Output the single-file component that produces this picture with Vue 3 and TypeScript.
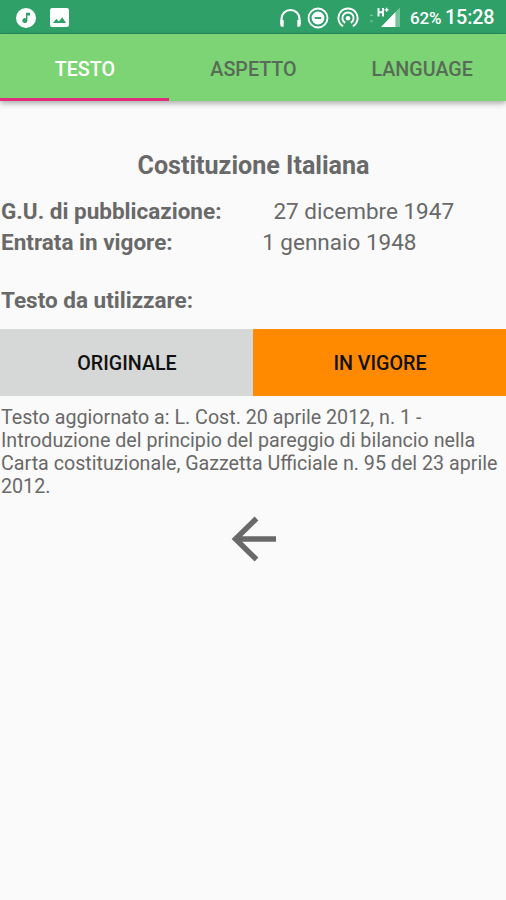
<script setup lang="ts">
import { ref } from 'vue'

interface Detail {
  label: string
  value: string
}

const tabs: string[] = ['TESTO', 'ASPETTO', 'LANGUAGE']
const activeTab = ref<number>(0)

const details: Detail[] = [
  { label: 'G.U. di pubblicazione:', value: '27 dicembre 1947' },
  { label: 'Entrata in vigore:', value: '1 gennaio 1948' },
]

const versions: string[] = ['ORIGINALE', 'IN VIGORE']
const version = ref<string>('IN VIGORE')
</script>

<template>
  <div class="screen">
    <header class="status">
      <svg class="music" viewBox="0 0 20 20">
        <circle cx="10" cy="10" r="10" fill="#fff" />
        <path d="M10 4.800h4v2.600h-2.600v5.100a2.500 2.500 0 1 1-1.400-2.200z" fill="#30a069" />
      </svg>
      <svg class="photo" viewBox="0 0 20 20">
        <rect width="20" height="20" rx="2.4" fill="#fff" />
        <path d="M3.200 15.800l3.600-4.600 2.500 3 3.500-4.400 4.200 6z" fill="#30a069" />
      </svg>
      <span class="spacer"></span>
      <svg class="headset" viewBox="0 0 22 19">
        <path d="M2.400 15.500V10.400a8.600 8.600 0 0 1 17.200 0v5.100" fill="none" stroke="#fff" stroke-width="2" />
        <path d="M1.300 11.500h3.200v6.300H2.600a1.300 1.300 0 0 1-1.300-1.300zM17.500 11.500h3.200v5a1.300 1.300 0 0 1-1.300 1.300h-1.900z" fill="#fff" />
      </svg>
      <svg class="dnd" viewBox="0 0 22 22">
        <circle cx="11" cy="11" r="9.500" fill="none" stroke="#fff" stroke-width="1.8" />
        <circle cx="11" cy="11" r="6.400" fill="#fff" />
        <path d="M7.700 11h6.600" stroke="#30a069" stroke-width="1.9" />
      </svg>
      <svg class="hotspot" viewBox="0 0 22 22">
        <g fill="none" stroke="#fff" stroke-width="1.9">
          <path d="M6.100 19.300a9.600 9.600 0 1 1 9.800 0" />
          <path d="M8.200 15.900a5.600 5.600 0 1 1 5.600 0" />
        </g>
        <circle cx="11" cy="11.300" r="2.300" fill="#fff" />
      </svg>
      <svg class="signal" viewBox="0 0 32 22">
        <path d="M0.500 9l2-2 2 2zM0.500 13.500l2 2 2-2z" fill="#76c39c" />
        <path d="M9.500 1v8.500M14 1v8.500M9.500 5.200H14" fill="none" stroke="#fff" stroke-width="1.9" />
        <path d="M15.600 2.800h4M17.600 0.800v4" stroke="#fff" stroke-width="1.300" />
        <path d="M26.500 5L31 0.500V20h-4.500z" fill="#76c39c" />
        <path d="M12 20L26.500 5V20z" fill="#fff" />
      </svg>
      <span class="battery">62%</span>
      <span class="clock">15:28</span>
    </header>

    <nav class="tabs">
      <button
        v-for="(tab, i) in tabs"
        :key="tab"
        class="tab"
        :class="{ active: i === activeTab }"
        @click="activeTab = i"
      >
        {{ tab }}
      </button>
    </nav>

    <main>
      <h1>Costituzione Italiana</h1>
      <dl>
        <div v-for="d in details" :key="d.label" class="detail">
          <dt>{{ d.label }}</dt>
          <dd>{{ d.value }}</dd>
        </div>
      </dl>
      <h2>Testo da utilizzare:</h2>
      <div class="versions">
        <button
          v-for="v in versions"
          :key="v"
          class="version"
          :class="{ selected: v === version }"
          @click="version = v"
        >
          {{ v }}
        </button>
      </div>
      <p>
        Testo aggiornato a: L. Cost. 20 aprile 2012, n. 1 -<br />
        Introduzione del principio del pareggio di bilancio nella<br />
        Carta costituzionale, Gazzetta Ufficiale n. 95 del 23 aprile<br />
        2012.
      </p>
      <button class="back" aria-label="Indietro">
        <svg viewBox="0 0 46 46">
          <path d="M45 23H5M25.500 2.500L4.500 23l21 20.500" fill="none" stroke="#696969" stroke-width="5.400" />
        </svg>
      </button>
    </main>
  </div>
</template>

<style>
body {
  margin: 0;
  background: #fafafa;
}
</style>

<style scoped>
.screen {
  width: 506px;
  height: 900px;
  overflow: hidden;
  background: #fafafa;
  color: #696969;
  font-family: Roboto, 'Liberation Sans', sans-serif;
}
button {
  margin: 0;
  padding: 0;
  border: 0;
  background: none;
  font: inherit;
}
svg {
  display: block;
  flex: none;
}
.status {
  display: flex;
  align-items: center;
  box-sizing: border-box;
  height: 34px;
  padding: 2px 12px 0 16px;
  background: #30a069;
  border-bottom: 1px solid #288f60;
  color: #fff;
  font-weight: 500;
}
.music { width: 20px; height: 20px; }
.photo { width: 19px; height: 19px; margin-left: 14px; }
.spacer { flex: 1; }
.headset { width: 23px; height: 20px; }
.dnd { width: 22px; height: 22px; margin-left: 5px; }
.hotspot { width: 22px; height: 22px; margin-left: 8px; }
.signal { width: 32px; height: 22px; margin-left: 10px; }
.battery { margin-left: 9px; font-size: 17px; width: 31px; white-space: nowrap; letter-spacing: -0.2px; }
.clock { margin-left: 4px; font-size: 19.7px; width: 49px; white-space: nowrap; letter-spacing: -0.1px; }
.tabs {
  display: flex;
  height: 67px;
  background: #7cd474;
  box-shadow: 0 2px 6px rgba(0, 0, 0, 0.35);
}
.tab {
  flex: 1;
  box-sizing: border-box;
  padding: 6px 0 0 1px;
  border-bottom: 3px solid transparent;
  color: #586b58;
  font-size: 19.7px;
  font-weight: 500;
}
.tab.active {
  border-bottom-color: #df2f7c;
  color: #fff;
}
h1 {
  margin: 49px 0 0;
  padding-left: 1px;
  font-size: 25.1px;
  line-height: 32px;
  font-weight: 700;
  text-align: center;
}
dl { margin: 14px 0 0 1px; }
.detail {
  display: flex;
  font-size: 22.5px;
  line-height: 30.5px;
}
dt { font-weight: 700; }
dd {
  flex: 1;
  margin: 0;
  font-weight: 400;
  text-align: center;
}
h2 {
  margin: 28px 0 0 1px;
  font-size: 22.5px;
  line-height: 30px;
  font-weight: 700;
}
.versions {
  display: flex;
  height: 67px;
  margin-top: 14px;
}
.version {
  flex: 1;
  padding-left: 1px;
  padding-top: 1px;
  background: #d6d7d7;
  color: #111;
  font-size: 19.7px;
  font-weight: 500;
}
.version.selected { background: #ff8a00; }
p {
  margin: 10px 0 0 1px;
  font-size: 19.68px;
  line-height: 23px;
  white-space: nowrap;
}
.back {
  display: block;
  margin: 18px auto 0;
  padding-left: 2px;
}
.back svg { width: 46px; height: 46px; }
</style>
